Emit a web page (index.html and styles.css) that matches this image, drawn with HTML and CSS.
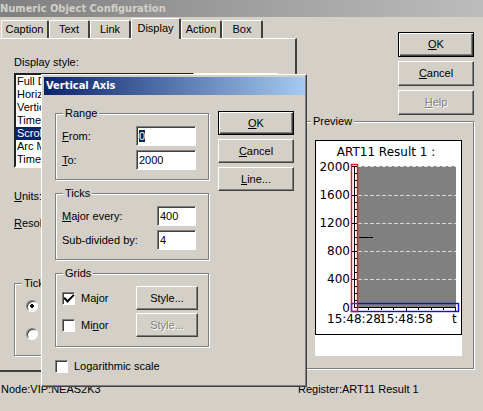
FILE: index.html
```html
<!DOCTYPE html>
<html lang="en">
<head>
    <meta charset="UTF-8">
    <meta name="viewport" content="width=device-width, initial-scale=1.0">
    <title>Numeric Object Configuration</title>
    <link rel="stylesheet" href="styles.css">
</head>
<body>
    <div class="window">
        <div class="titlebar inactive">Numeric Object Configuration</div>
        <div class="main">
            <div class="left">
                <div class="tabs">
                    <button class="tab">Caption</button>
                    <button class="tab">Text</button>
                    <button class="tab">Link</button>
                    <button class="tab active">Display</button>
                    <button class="tab">Action</button>
                    <button class="tab">Box</button>
                </div>
                <div class="panel">
                    <label class="list-label" for="style">Display style:</label>
                    <div class="list-row">
                        <select class="list" id="style" size="7">
                            <option>Full Di</option>
                            <option>Horizo</option>
                            <option>Vertical</option>
                            <option>Time</option>
                            <option selected>Scroll</option>
                            <option>Arc Me</option>
                            <option>Time</option>
                        </select>
                        <div class="list-side"></div>
                    </div>
                    <p class="field-name"><u>U</u>nits:</p>
                    <p class="field-name"><u>R</u>esol</p>
                    <fieldset class="group tick-group">
                        <legend>Tick</legend>
                        <input type="radio" name="tick" aria-label="Tick 1" checked>
                        <input type="radio" name="tick" aria-label="Tick 2">
                    </fieldset>
                </div>
            </div>
            <div class="right">
                <div class="buttons">
                    <button class="btn default"><u>O</u>K</button>
                    <button class="btn"><u>C</u>ancel</button>
                    <button class="btn" disabled><u>H</u>elp</button>
                </div>
                <fieldset class="group preview">
                    <legend>Preview</legend>
                    <div class="preview-area">
                        <svg class="chart" viewBox="0 0 147 195">
                            <rect x="0.5" y="0.5" width="146" height="194" fill="#fff" stroke="#000"/>
                            <rect x="43" y="26" width="98" height="141" fill="#808080"/>
                            <!-- grid -->
                            <path d="M43 26.5h98M43 55.5h98M43 83.5h98M43 111.5h98M43 139.5h98" stroke="#d8d8d8" stroke-dasharray="4 2"/>
                            <path d="M44 97.5h14" stroke="#000"/>
                            <!-- axes -->
                            <rect x="37" y="26" width="6" height="142" fill="#fff"/>
                            <rect x="37" y="168" width="106" height="3" fill="#fff"/>
                            <path d="M39.5 26v142M39 167.5h102" stroke="#000"/>
                            <path d="M37 26.5h5M37 55.5h5M37 83.5h5M37 111.5h5M37 139.5h5" stroke="#000"/>
                            <path d="M39 33.5h3M39 40.5h3M39 47.5h3M39 62.5h3M39 69.5h3M39 76.5h3M39 90.5h3M39 97.5h3M39 104.5h3M39 118.5h3M39 125.5h3M39 132.5h3M39 146.5h3M39 153.5h3M39 160.5h3" stroke="#000"/>
                            <path d="M53.5 167v3M66.5 167v3M78.5 167v3M91.5 167v4M103.5 167v3M116.5 167v3M128.5 167v3M140.5 167v4" stroke="#000"/>
                            <rect x="36.5" y="24.5" width="6" height="147" fill="none" stroke="#f01020" stroke-width="1.4"/>
                            <rect x="36.5" y="163.5" width="107" height="8" fill="none" stroke="#1010d0" stroke-width="1.4"/>
                            <rect x="36.5" y="163.5" width="6" height="8" fill="none" stroke="#a000b0"/>
                            <text x="71" y="16" text-anchor="middle">ART11 Result 1 :</text>
                            <g text-anchor="end">
                                <text x="35" y="31">2000</text>
                                <text x="35" y="59">1600</text>
                                <text x="35" y="87">1200</text>
                                <text x="35" y="115">800</text>
                                <text x="35" y="143">400</text>
                                <text x="35" y="172">0</text>
                            </g>
                            <text x="12" y="183">15:48:28</text>
                            <text x="64" y="183">15:48:58</text>
                            <text x="137" y="183">t</text>
                        </svg>
                    </div>
                </fieldset>
            </div>
        </div>
        <div class="status">
            <span class="status-node">Node:VIP:NEAS2K3</span>
            <span>Register:ART11 Result 1</span>
        </div>

        <div class="dialog">
            <div class="titlebar">Vertical Axis</div>
            <div class="dialog-body">
                <div class="dialog-groups">
                    <fieldset class="group">
                        <legend>Range</legend>
                        <div class="row">
                            <label for="from"><u>F</u>rom:</label>
                            <input class="text wide" id="from" type="text" value="0">
                        </div>
                        <div class="row">
                            <label for="to"><u>T</u>o:</label>
                            <input class="text wide" id="to" type="text" value="2000">
                        </div>
                    </fieldset>
                    <fieldset class="group">
                        <legend>Ticks</legend>
                        <div class="row">
                            <label for="every"><u>M</u>ajor every:</label>
                            <input class="text" id="every" type="text" value="400">
                        </div>
                        <div class="row">
                            <label for="sub">Sub-divided by:</label>
                            <input class="text" id="sub" type="text" value="4">
                        </div>
                    </fieldset>
                    <fieldset class="group grids">
                        <legend>Grids</legend>
                        <div class="row">
                            <label class="check"><input type="checkbox" checked>Major</label>
                            <button class="btn small">Style...</button>
                        </div>
                        <div class="row">
                            <label class="check"><input type="checkbox"><span>Mi<u>n</u>or</span></label>
                            <button class="btn small" disabled>Style...</button>
                        </div>
                    </fieldset>
                    <label class="check log"><input type="checkbox">Logarithmic scale</label>
                </div>
                <div class="dialog-buttons">
                    <button class="btn default"><u>O</u>K</button>
                    <button class="btn"><u>C</u>ancel</button>
                    <button class="btn"><u>L</u>ine...</button>
                </div>
            </div>
        </div>
    </div>
<script>
    window.onload = function() {
        document.getElementById('from').select();
    };
</script>
</body>
</html>
```
FILE: styles.css
```css
* {
    box-sizing: border-box;
}
body {
    margin: 0;
    background-color: #d4d0c8;
    font-family: "Liberation Sans", Arial, sans-serif;
    font-size: 11px;
    line-height: 13px;
    color: #000;
}
button, input, select {
    font: inherit;
    color: inherit;
    margin: 0;
}
.window {
    position: relative;
}
.titlebar {
    height: 18px;
    padding: 0 2px;
    background: linear-gradient(to right, #0a246a, #a6caf0);
    color: #fff;
    font-family: "DejaVu Sans Condensed", "DejaVu Sans", sans-serif;
    font-size: 11px;
    font-weight: bold;
    line-height: 18px;
}
.titlebar.inactive {
    height: 17px;
    padding: 0;
    background: linear-gradient(to right, #808080, #bcbcbc);
    color: #d4d0c8;
    line-height: 17px;
}
.main {
    display: flex;
    gap: 6px;
}
.left {
    flex: 1;
    min-width: 0;
    display: flex;
    flex-direction: column;
}

/* tabs */
.tabs {
    display: flex;
    align-items: flex-end;
    height: 21px;
    padding-left: 1px;
}
.tab {
    flex: 0 0 41px;
    height: 18px;
    padding: 0 2px;
    background-color: #d4d0c8;
    border: 1px solid #fff;
    border-right: 2px solid #404040;
    border-bottom: 0;
    border-radius: 2px 2px 0 0;
    text-align: center;
}
.tab:first-child {
    flex-basis: 48px;
}
.tab.active {
    flex-basis: 50px;
    height: 21px;
    margin-bottom: -1px;
    padding-bottom: 2px;
    position: relative;
}
.panel {
    flex: 1;
    padding: 17px 14px 14px;
    border-top: 1px solid #fff;
    border-right: 2px solid #404040;
    border-bottom: 2px solid #404040;
}
.list-label {
    display: block;
    margin-bottom: 4px;
}
.list-row {
    display: flex;
}
.list {
    width: 180px;
    height: 95px;
    padding: 0;
    overflow: hidden;
    background-color: #fff;
    border: 2px solid;
    border-color: #202020 #fff #fff #202020;
    border-radius: 0;
    outline: none;
}
.list option {
    height: 13px;
    min-height: 13px;
    padding: 0 1px;
    line-height: 13px;
}
.list option:checked {
    background: linear-gradient(#0a246a, #0a246a);
    color: #fff;
}
.list-side {
    width: 84px;
    height: 24px;
    border-top: 1px solid #fff;
}
.field-name {
    margin: 22px 0 -8px;
}

/* group boxes */
.group {
    margin: 0;
    min-width: 0;
    padding: 6px 12px 9px 6px;
    border: 1px solid #808080;
    box-shadow: 1px 1px #fff, inset 1px 1px #fff;
}
.group legend {
    margin-left: 1px;
    padding: 0 2px;
    background-color: #d4d0c8;
}
.tick-group {
    display: flex;
    flex-direction: column;
    gap: 16px;
    margin-top: 55px;
    padding: 10px 11px 15px;
}
.tick-group legend {
    margin-left: -4px;
}

/* buttons */
.btn {
    width: 76px;
    height: 25px;
    padding: 0;
    background-color: #d4d0c8;
    border: 1px solid;
    border-color: #fff #404040 #404040 #fff;
    border-radius: 0;
    box-shadow: inset -1px -1px #808080;
}
.btn.default {
    border-color: #000;
    box-shadow: inset 1px 1px #fff, inset -1px -1px #404040, inset -2px -2px #808080;
}
.btn:disabled {
    color: #808080;
    text-shadow: 1px 1px #fff;
}
.btn.small {
    width: 62px;
    height: 24px;
}
.right {
    width: 180px;
    padding: 15px 9px 0 0;
    display: flex;
    flex-direction: column;
    align-items: flex-end;
}
.buttons {
    display: flex;
    flex-direction: column;
    gap: 4px;
}
.preview {
    width: 100%;
    padding: 12px 11px 12px;
}
.preview legend {
    margin-left: -4px;
}
.preview-area {
    background-color: #fff;
    padding-bottom: 21px;
}
.chart {
    display: block;
    width: 147px;
    height: 195px;
    font-family: "DejaVu Sans", Verdana, sans-serif;
    font-size: 12px;
}
.status {
    display: flex;
    padding: 11px 0 0 1px;
}
.status-node {
    width: 297px;
}

/* axis dialog */
.dialog {
    position: absolute;
    left: 41px;
    top: 74px;
    width: 266px;
    padding: 2px 1px 13px 2px;
    background-color: #d4d0c8;
    border: 1px solid;
    border-color: #fff #404040 #404040 #fff;
    box-shadow: inset -1px -1px #808080;
}
.dialog-body {
    display: flex;
    justify-content: space-between;
    padding: 12px 11px 0;
}
.dialog-groups {
    display: flex;
    flex-direction: column;
    gap: 7px;
    width: 154px;
}
.dialog-buttons {
    display: flex;
    flex-direction: column;
    gap: 4px;
    padding-top: 4px;
}
.dialog-buttons .btn {
    height: 24px;
}
.row {
    display: flex;
    justify-content: space-between;
    align-items: center;
}
.row + .row {
    margin-top: 4px;
}
.text {
    width: 39px;
    height: 20px;
    padding: 0 2px;
    background-color: #fff;
    border: 1px solid;
    border-color: #808080 #fff #fff #808080;
    border-radius: 0;
    box-shadow: inset 1px 1px #404040;
    outline: none;
}
.text.wide {
    width: 60px;
}
.text::selection {
    background-color: #0a246a;
    color: #fff;
}
.check {
    display: flex;
    align-items: center;
    gap: 6px;
}
.grids {
    padding-right: 10px;
}
.grids .row + .row {
    margin-top: 3px;
}
.log {
    margin-top: 6px;
}
input[type="checkbox"], input[type="radio"] {
    appearance: none;
    width: 13px;
    height: 13px;
    background-color: #fff;
    border: 1px solid;
    border-color: #808080 #fff #fff #808080;
    box-shadow: inset 1px 1px #404040;
}
input[type="checkbox"]:checked {
    display: grid;
    place-items: center;
}
input[type="checkbox"]:checked::before {
    content: "";
    width: 8px;
    height: 4px;
    margin-bottom: 2px;
    border-left: 2px solid #000;
    border-bottom: 2px solid #000;
    transform: rotate(-45deg);
}
input[type="radio"] {
    width: 12px;
    height: 12px;
    border-radius: 50%;
}
input[type="radio"]:checked {
    background-image: radial-gradient(circle, #000 2px, transparent 2px);
}
```
